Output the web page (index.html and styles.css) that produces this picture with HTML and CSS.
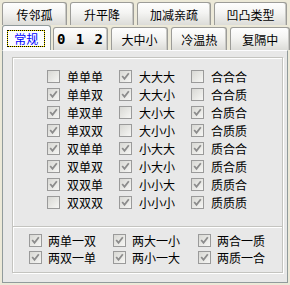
FILE: index.html
```html
<!DOCTYPE html>
<html lang="zh">
<head>
    <meta charset="UTF-8">
    <title>常规</title>
    <link rel="stylesheet" href="styles.css">
</head>
<body>
    <div class="window">
        <!-- Back row of tabs -->
        <div class="tab-row row-back">
            <div class="tab w65">传邻孤</div>
            <div class="tab w64">升平降</div>
            <div class="tab w74">加减亲疏</div>
            <div class="tab w73">凹凸类型</div>
        </div>

        <!-- Front row of tabs -->
        <div class="tab-row row-front">
            <div class="tab active"><span class="focus">常规</span></div>
            <div class="tab w56 bold">0 1 2</div>
            <div class="tab w57">大中小</div>
            <div class="tab w57">冷温热</div>
            <div class="tab w60">复隔中</div>
        </div>

        <div class="panel">
            <div class="group">
                <div class="grid-main">
                    <label class="item"><span class="box"></span>单单单</label>
                    <label class="item"><span class="box on"></span>大大大</label>
                    <label class="item"><span class="box"></span>合合合</label>

                    <label class="item"><span class="box on"></span>单单双</label>
                    <label class="item"><span class="box on"></span>大大小</label>
                    <label class="item"><span class="box"></span>合合质</label>

                    <label class="item"><span class="box on"></span>单双单</label>
                    <label class="item"><span class="box"></span>大小大</label>
                    <label class="item"><span class="box on"></span>合质合</label>

                    <label class="item"><span class="box on"></span>单双双</label>
                    <label class="item"><span class="box"></span>大小小</label>
                    <label class="item"><span class="box on"></span>合质质</label>

                    <label class="item"><span class="box on"></span>双单单</label>
                    <label class="item"><span class="box on"></span>小大大</label>
                    <label class="item"><span class="box on"></span>质合合</label>

                    <label class="item"><span class="box on"></span>双单双</label>
                    <label class="item"><span class="box on"></span>小大小</label>
                    <label class="item"><span class="box on"></span>质合质</label>

                    <label class="item"><span class="box on"></span>双双单</label>
                    <label class="item"><span class="box on"></span>小小大</label>
                    <label class="item"><span class="box on"></span>质质合</label>

                    <label class="item"><span class="box"></span>双双双</label>
                    <label class="item"><span class="box on"></span>小小小</label>
                    <label class="item"><span class="box on"></span>质质质</label>
                </div>

                <div class="separator"></div>

                <div class="grid-pairs">
                    <label class="item"><span class="box on"></span>两单一双</label>
                    <label class="item"><span class="box on"></span>两大一小</label>
                    <label class="item"><span class="box on"></span>两合一质</label>
                    <label class="item"><span class="box on"></span>两双一单</label>
                    <label class="item"><span class="box on"></span>两小一大</label>
                    <label class="item"><span class="box on"></span>两质一合</label>
                </div>
            </div>
        </div>
    </div>
</body>
</html>
```

FILE: styles.css
```css
body {
    margin: 0;
    width: 290px;
    height: 285px;
    background-color: #ece9d8;
    font-family: "Noto Sans CJK SC", "DejaVu Sans", sans-serif;
    font-size: 12px;
    color: #000;
    overflow: hidden;
}

.window {
    padding-top: 2px;
}

/* Tabs */

.tab-row {
    display: flex;
    gap: 3px;
    padding-left: 2px;
}

.row-back {
    height: 23px;
}

.row-front {
    height: 25px;
    align-items: flex-end;
}

.tab {
    box-sizing: border-box;
    height: 23px;
    display: flex;
    align-items: center;
    justify-content: center;
    border: 1px solid #9c9c98;
    border-bottom: none;
    border-radius: 3px 3px 0 0;
    background: linear-gradient(#fefefe, #f4f4f2 45%, #dcdcd8);
    box-shadow: inset -1px 0 0 #c8c8c4;
}

.w56 { width: 56px; }
.w57 { width: 57px; }
.w60 { width: 60px; }
.w64 { width: 64px; }
.w65 { width: 65px; }
.w73 { width: 73px; }
.w74 { width: 74px; }

.bold {
    font-family: "DejaVu Sans Mono", monospace;
    font-weight: bold;
    font-size: 14px;
    letter-spacing: 1px;
}

.tab.active {
    width: 49px;
    height: 25px;
    margin-right: -1px;
    background: #fcfcfe;
    border-color: #919b9c;
    box-shadow: none;
    position: relative;
    z-index: 1;
}

.focus {
    color: #0000ff;
    border: 1px dotted #000;
    background: linear-gradient(#fcfcfe, #fcfcfe) padding-box, #f0e000 border-box;
    padding: 0 6px;
    line-height: 15px;
    margin-top: 1px;
}

/* Panel */

.panel {
    box-sizing: border-box;
    margin-left: 2px;
    width: 286px;
    height: 233px;
    background-color: #e8e8e8;
    border: 1px solid #919b9c;
    border-top-color: #fcfcfe;
    padding: 6px 0 0 9px;
}

.group {
    box-sizing: border-box;
    width: 271px;
    height: 216px;
    border: 1px solid #c4c4c0;
    box-shadow: 1px 1px 0 #fff, inset 1px 1px 0 #fff;
}

.grid-main {
    display: grid;
    grid-template-columns: repeat(3, 72px);
    grid-auto-rows: 18px;
    padding: 9px 0 0 34px;
}

.separator {
    margin-top: 15px;
    height: 1px;
    background-color: #c4c4c0;
    border-bottom: 1px solid #fff;
}

.grid-pairs {
    display: grid;
    grid-template-columns: 84px 85px 85px;
    grid-auto-rows: 17px;
    padding: 4px 0 0 16px;
}

.item {
    display: flex;
    align-items: center;
    gap: 7px;
    white-space: nowrap;
}

.grid-pairs .item {
    gap: 6px;
}

/* Checkboxes */

.box {
    box-sizing: border-box;
    width: 13px;
    height: 13px;
    flex: none;
    border: 1px solid #9a9a9a;
    background: linear-gradient(135deg, #d8d8d4, #f6f6f4);
}

.box.on {
    background-image: url("data:image/svg+xml,%3Csvg xmlns='http://www.w3.org/2000/svg' width='11' height='11'%3E%3Cpath d='M2.2 5 L4.5 7.8 L8.8 2.2' fill='none' stroke='%238c8c8c' stroke-width='1.8'/%3E%3C/svg%3E"),
        linear-gradient(135deg, #d8d8d4, #f6f6f4);
}
```
